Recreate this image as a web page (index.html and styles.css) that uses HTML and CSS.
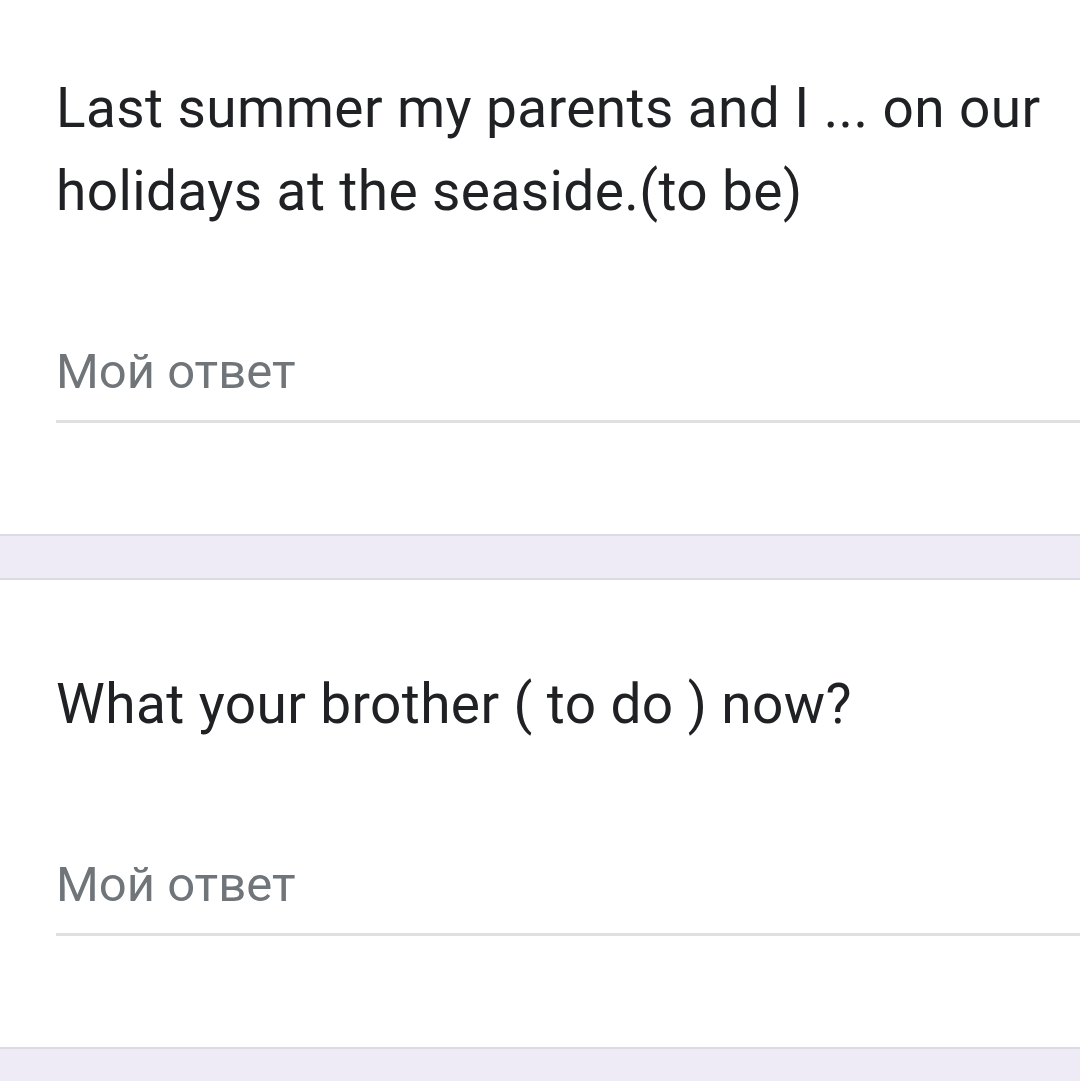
FILE: index.html
```html
<!DOCTYPE html>
<html lang="ru">
<head>
<meta charset="utf-8">
<link rel="stylesheet" href="styles.css">
</head>
<body>
<div class="page">
  <div class="card">
    <div class="question">Last summer my parents and I ... on our holidays at the seaside.(to be)</div>
    <div class="answer"><span class="placeholder">Мой ответ</span></div>
  </div>
  <div class="gap"></div>
  <div class="card">
    <div class="question">What your brother ( to do ) now?</div>
    <div class="answer"><span class="placeholder">Мой ответ</span></div>
  </div>
  <div class="gap gap-end"></div>
</div>
</body>
</html>
```
FILE: styles.css
```css
html, body {
  margin: 0;
  padding: 0;
  background: #ffffff;
}
body {
  height: 1081px;
  overflow: hidden;
}
.page {
  margin-top: -16px;
  display: flex;
  flex-direction: column;
}
.card {
  background: #ffffff;
  padding: 83px 0 111px 56px;
  border-bottom: 2px solid #dcdae2;
}
.gap {
  height: 42px;
  background: #eeebf6;
  border-bottom: 2px solid #dcdae2;
  flex: none;
}
.gap-end {
  height: 60px;
  border-bottom: none;
}
.question {
  font-family: Roboto, "Liberation Sans", sans-serif;
  font-size: 55px;
  line-height: 83px;
  letter-spacing: 0.4px;
  color: #202124;
  padding-right: 24px;
}
.answer {
  margin-top: 109px;
  padding-bottom: 18px;
  border-bottom: 3px solid #e0e0e0;
  font-family: Roboto, "Liberation Sans", sans-serif;
  font-size: 49px;
  line-height: 60px;
  color: #70757a;
}
```
